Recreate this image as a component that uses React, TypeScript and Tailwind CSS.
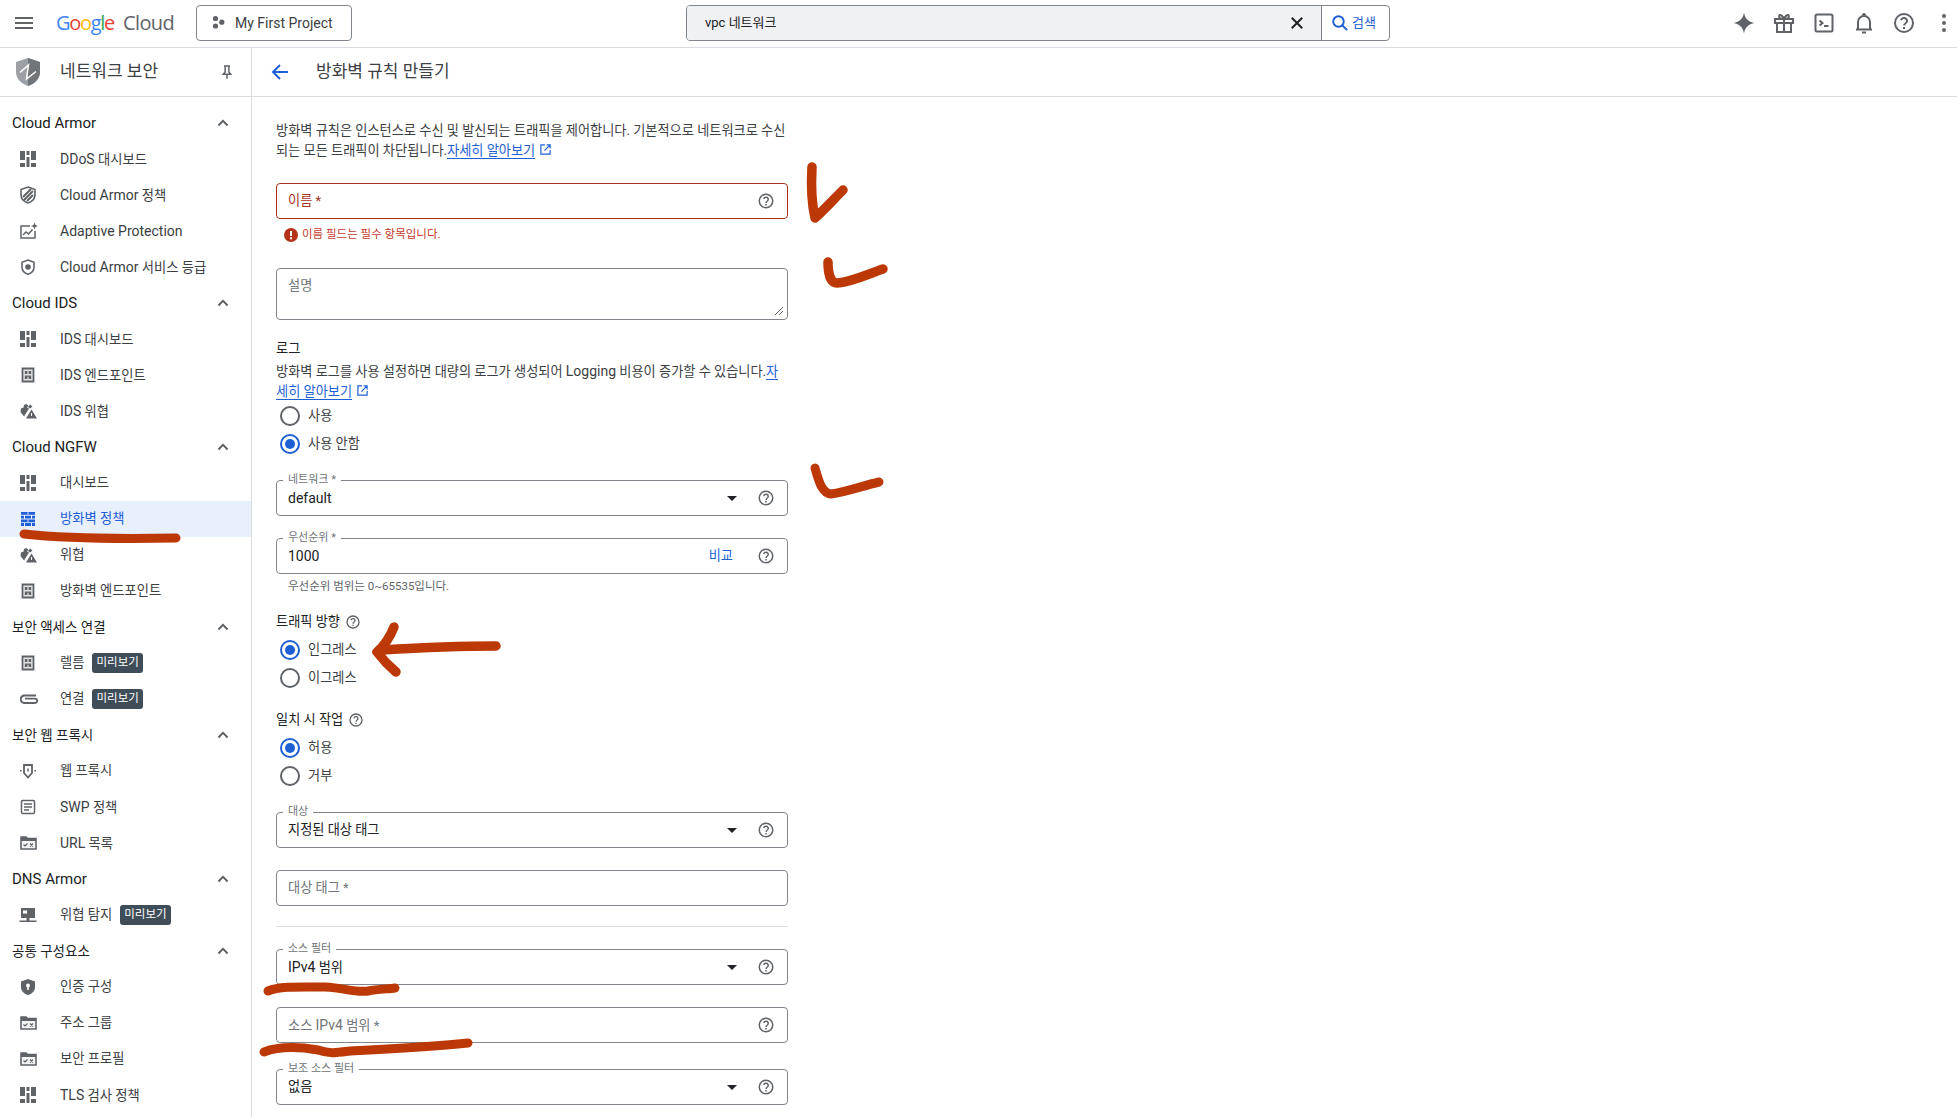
import React from "react";

const FONT = "font-['Roboto','Noto_Sans_CJK_KR',sans-serif]";
const G = "#5f6368";

type IconProps = { c?: string };

function Mixed({ text, latin = "text-[14px]" }: { text: string; latin?: string }) {
  const parts = text.split(/([A-Za-z0-9]+(?: [A-Za-z0-9]+)*)/);
  return (
    <>
      {parts.map((p, i) => (i % 2 === 1 ? <span key={i} className={latin}>{p}</span> : p))}
    </>
  );
}

const Dash = ({ c = G }: IconProps) => (
  <svg width="24" height="24" viewBox="0 0 24 24" fill={c}>
    <path d="M4 4h5v9H4zM4 16h5v4H4zM10.500 4h3v4h-3zM10.500 10h3v10h-3zM15 4h5v9h-5zM15 16h5v4h-5z" />
  </svg>
);
const StripeShield = () => (
  <svg width="24" height="24" viewBox="0 0 24 24" fill="none">
    <path d="M12 4l7 2.500v5.300c0 4-2.900 7-7 8.200-4.100-1.200-7-4.200-7-8.200V6.500z" stroke={G} strokeWidth="1.600" />
    <path d="M7 14l8-8M8 17l9-9M11 18l6-6" stroke={G} strokeWidth="2" />
  </svg>
);
const ChartSpark = () => (
  <svg width="24" height="24" viewBox="0 0 24 24" fill="none" stroke={G} strokeWidth="1.500">
    <path d="M14 7H5v12h14v-7" />
    <path d="M7 16l3-3 2.500 2 4-4.500" />
    <path d="M18.500 3.500l1 2.500 2.500 1-2.500 1-1 2.500-1-2.500-2.500-1 2.500-1z" fill={G} stroke="none" />
  </svg>
);
const DotShield = () => (
  <svg width="24" height="24" viewBox="0 0 24 24" fill="none">
    <path d="M12 5l6 2.300v4.700c0 3.500-2.500 6.200-6 7.300-3.500-1.100-6-3.800-6-7.300V7.300z" stroke={G} strokeWidth="1.600" />
    <circle cx="12" cy="12" r="2.800" fill={G} />
  </svg>
);
const Endpoint = () => (
  <svg width="24" height="24" viewBox="0 0 24 24" fill="none">
    <path d="M6.500 5.500h11v13h-11z" fill="#e3e4e6" stroke={G} strokeWidth="1.800" />
    <path d="M8.800 8h2.600v3H8.800zM12.600 8h2.600v3h-2.600zM8.800 12.500h6.400v1.200H8.800zM8.800 13.700h2.600v2.300H8.800zM12.600 13.700h2.600v2.300h-2.600z" fill={G} />
  </svg>
);
const Threat = () => (
  <svg width="24" height="24" viewBox="0 0 24 24" fill={G}>
    <path d="M10 5l2.500 1.500L11 8.500l2 1-5 8-3.500-4.500L5 9.500l2.500-1L8 6z" />
    <path d="M14 5.500l2.500 2-2.500 2-2-1.500z" />
    <path d="M15.500 10.500L21 19.500H10z" />
    <path d="M15 14h1v3h-1z" fill="#fff" />
  </svg>
);
const Firewall = ({ c = "#1f5fd6" }: IconProps) => (
  <svg width="24" height="24" viewBox="0 0 24 24" fill={c}>
    <path d="M5 5h14v2.800H5zM5 8.700h3v2.800H5zM9 8.700h6v2.800H9zM16 8.700h3v2.800h-3zM5 12.400h14v2.800H5zM5 16.100h3v2.800H5zM9 16.100h6v2.800H9zM16 16.100h3v2.800h-3z" />
    <path d="M11.600 5h.8v2.800h-.8zM11.600 12.400h.8v2.800h-.8z" fill="#e8f0fe" />
  </svg>
);
const Clip = () => (
  <svg width="24" height="24" viewBox="0 0 24 24" fill="none" stroke={G} strokeWidth="1.800">
    <path d="M20 8.500H8a3.800 3.800 0 0 0 0 7.500h11a2.100 2.100 0 0 0 0-4.300H9" />
  </svg>
);
const Proxy = () => (
  <svg width="24" height="24" viewBox="0 0 24 24" fill="none">
    <path d="M8 6h8v8l-4 4.500L8 14z" stroke={G} strokeWidth="1.800" />
    <path d="M11.300 9.500h1.500v3h-1.500z" fill={G} />
    <path d="M4 11h1.500v1.500H4zM18.500 11H20v1.500h-1.500z" fill={G} />
  </svg>
);
const Doc = () => (
  <svg width="24" height="24" viewBox="0 0 24 24" fill="none" stroke={G}>
    <rect x="5.500" y="5.500" width="13" height="13" rx="1.200" strokeWidth="1.500" />
    <path d="M8 9h8M8 12h8M8 15h5" strokeWidth="1.500" />
  </svg>
);
const FolderCheck = () => (
  <svg width="24" height="24" viewBox="0 0 24 24" fill="none">
    <path d="M5 6h5l1.500 1.500H20V18H5z" stroke={G} strokeWidth="1.600" fill="#f3f3f4" />
    <path d="M5 6h5l1.500 1.500H20V10H5z" fill={G} />
    <path d="M7.500 13.500l1.500 1.500 2.500-2.500" stroke={G} strokeWidth="1.200" />
    <path d="M14 12.500l3 3M17 12.500l-3 3" stroke={G} strokeWidth="1.200" />
  </svg>
);
const Monitor = () => (
  <svg width="24" height="24" viewBox="0 0 24 24" fill={G}>
    <path d="M5 5h14v10H5z" />
    <path d="M3.500 17.500h17V19h-17zM10.500 15h3v3h-3z" />
    <path d="M7 7.500h4v3H7z" fill="#fff" />
  </svg>
);
const KeyShield = () => (
  <svg width="24" height="24" viewBox="0 0 24 24">
    <path d="M12 4l7 2.600v5.300c0 3.900-2.900 7-7 8.100-4.100-1.100-7-4.200-7-8.100V6.600z" fill={G} />
    <circle cx="12" cy="10.500" r="2" fill="#fff" />
    <path d="M11.200 11h1.600v4h-1.600z" fill="#fff" />
  </svg>
);

const HelpIcon = ({ size = 18 }: { size?: number }) => (
  <svg width={size} height={size} viewBox="0 0 24 24" fill={G} className="shrink-0">
    <path d="M12 2a10 10 0 1 0 0 20 10 10 0 0 0 0-20zm0 18a8 8 0 1 1 0-16 8 8 0 0 1 0 16z" />
    <path d="M11 16h2v2h-2zM12.600 6.100c-2.100-.3-3.900.9-4.500 2.800l1.800.7c.3-1.100 1.300-1.800 2.400-1.700 1 .1 1.800 1 1.700 2 0 1.600-2.800 1.900-2.800 4.600h2c0-1.900 2.800-2.300 2.800-4.600 0-1.900-1.500-3.500-3.400-3.800z" />
  </svg>
);
const ExtLink = () => (
  <svg width="13" height="13" viewBox="0 0 24 24" fill="none" stroke="#1f5fd6" strokeWidth="2.200" className="inline-block ml-[4px] align-[-1px]">
    <path d="M11 3.500H3.500v17h17V13M14 3.500h6.500V10M20.500 3.500L10 14" />
  </svg>
);
const Caret = () => (
  <svg width="10" height="5" viewBox="0 0 10 5" fill="#202124" className="shrink-0">
    <path d="M0 0h10L5 5z" />
  </svg>
);
const Chevron = () => (
  <svg width="20" height="20" viewBox="0 0 24 24" fill="none" stroke={G} strokeWidth="2.400">
    <path d="M6.500 15l5.500-5.500 5.500 5.500" />
  </svg>
);

type Item = { label: string; icon: React.ReactNode; badge?: boolean; active?: boolean };
type Section = { title: string; items: Item[] };
const sections: Section[] = [
  { title: "Cloud Armor", items: [
    { label: "DDoS 대시보드", icon: <Dash /> },
    { label: "Cloud Armor 정책", icon: <StripeShield /> },
    { label: "Adaptive Protection", icon: <ChartSpark /> },
    { label: "Cloud Armor 서비스 등급", icon: <DotShield /> },
  ] },
  { title: "Cloud IDS", items: [
    { label: "IDS 대시보드", icon: <Dash /> },
    { label: "IDS 엔드포인트", icon: <Endpoint /> },
    { label: "IDS 위협", icon: <Threat /> },
  ] },
  { title: "Cloud NGFW", items: [
    { label: "대시보드", icon: <Dash /> },
    { label: "방화벽 정책", icon: <Firewall />, active: true },
    { label: "위협", icon: <Threat /> },
    { label: "방화벽 엔드포인트", icon: <Endpoint /> },
  ] },
  { title: "보안 액세스 연결", items: [
    { label: "렐름", icon: <Endpoint />, badge: true },
    { label: "연결", icon: <Clip />, badge: true },
  ] },
  { title: "보안 웹 프록시", items: [
    { label: "웹 프록시", icon: <Proxy /> },
    { label: "SWP 정책", icon: <Doc /> },
    { label: "URL 목록", icon: <FolderCheck /> },
  ] },
  { title: "DNS Armor", items: [
    { label: "위협 탐지", icon: <Monitor />, badge: true },
  ] },
  { title: "공통 구성요소", items: [
    { label: "인증 구성", icon: <KeyShield /> },
    { label: "주소 그룹", icon: <FolderCheck /> },
    { label: "보안 프로필", icon: <FolderCheck /> },
    { label: "TLS 검사 정책", icon: <Dash /> },
  ] },
];

function TopBar() {
  return (
    <header className="h-12 shrink-0 border-b border-[#dadce0] flex items-center pb-px relative bg-white">
      <svg width="24" height="24" viewBox="0 0 24 24" fill={G} className="ml-3">
        <path d="M3 6h18v2H3zM3 11h18v2H3zM3 16h18v2H3z" />
      </svg>
      <div className="ml-[21px] w-[118px] flex items-baseline text-[20px] font-['Open_Sans',sans-serif] leading-none">
        <span className="tracking-[-1.300px] flex -ml-px">
          <span className="text-[#4285f4]">G</span>
          <span className="text-[#ea4335]">o</span>
          <span className="text-[#fbbc04]">o</span>
          <span className="text-[#4285f4]">g</span>
          <span className="text-[#34a853]">l</span>
          <span className="text-[#ea4335]">e</span>
        </span>
        <span className="text-[#5f6368] ml-[9px] tracking-[-0.600px]">Cloud</span>
      </div>
      <button className="ml-[21px] h-9 w-[156px] border border-[#80868b] rounded-[4px] flex items-center text-[14px] text-[#3c4043]">
        <svg width="16" height="16" viewBox="0 0 16 16" fill={G} className="ml-[13px] mr-[9px]">
          <circle cx="5.500" cy="3.500" r="2.600" />
          <circle cx="5.500" cy="11" r="2.600" />
          <circle cx="11.800" cy="7.200" r="2.600" />
        </svg>
        My First Project
      </button>
      <div className="ml-[334px] h-9 w-[704px] border border-[#80868b] rounded-[4px] flex overflow-hidden">
        <div className="flex-1 bg-[#f0f1f3] flex items-center pl-[18px] text-[13px] text-[#202124] border-r border-[#80868b]">
          <span className="flex-1">vpc 네트워크</span>
          <svg width="18" height="18" viewBox="0 0 24 24" fill="none" stroke="#202124" strokeWidth="2.600" className="mr-[15px]">
            <path d="M5 5l14 14M19 5L5 19" />
          </svg>
        </div>
        <div className="w-[67px] flex items-center pl-[9px] text-[#1f5fd6] text-[13px]">
          <svg width="18" height="18" viewBox="0 0 24 24" fill="none" stroke="#1f5fd6" strokeWidth="2.600" className="shrink-0 mr-[3px]">
            <circle cx="10" cy="10" r="7" />
            <path d="M15 15l6.500 6.500" />
          </svg>
          검색
        </div>
      </div>
      <div className="ml-auto flex items-center">
        <div className="w-10 flex justify-center">
          <svg width="24" height="24" viewBox="0 0 24 24" fill={G}>
            <path d="M12 1.500c.8 5.800 4.400 9.600 10.500 10.500-6.100.9-9.700 4.700-10.500 10.500-.8-5.800-4.400-9.600-10.500-10.500 6.100-.9 9.700-4.700 10.500-10.500z" />
          </svg>
        </div>
        <div className="w-10 flex justify-center">
          <svg width="24" height="24" viewBox="0 0 24 24" fill="none" stroke={G} strokeWidth="2">
            <path d="M3 8h18v4H3zM5 12v9h14v-9M12 8v13M12 8C10 3 6 3 7.500 6.500 8 7.500 10 8 12 8zM12 8c2-5 6-5 4.500-1.500C16 7.500 14 8 12 8z" />
          </svg>
        </div>
        <div className="w-10 flex justify-center">
          <svg width="24" height="24" viewBox="0 0 24 24" fill="none" stroke={G} strokeWidth="2">
            <rect x="3.500" y="3.500" width="17" height="17" rx="1.500" />
            <path d="M7.500 9.500l3 2.500-3 2.500M12 15h4.500" />
          </svg>
        </div>
        <div className="w-10 flex justify-center">
          <svg width="24" height="24" viewBox="0 0 24 24" fill="none" stroke={G} strokeWidth="2">
            <path d="M4 18.500h16M6 18.500V11a6 6 0 0 1 12 0v7.500" />
            <path d="M10 21.500h4" />
            <circle cx="12" cy="4" r="1" fill={G} />
          </svg>
        </div>
        <div className="w-10 flex justify-center"><HelpIcon size={24} /></div>
        <div className="w-[33px] flex justify-start pl-[8px]">
          <svg width="24" height="24" viewBox="0 0 24 24" fill={G} className="shrink-0">
            <circle cx="12" cy="5" r="2" /><circle cx="12" cy="12" r="2" /><circle cx="12" cy="19" r="2" />
          </svg>
        </div>
      </div>
    </header>
  );
}

function Sidebar() {
  return (
    <aside className="w-[252px] shrink-0 border-r border-[#dadce0] flex flex-col">
      <div className="h-[49px] shrink-0 border-b border-[#dadce0] flex items-center relative">
        <svg width="28" height="30" viewBox="0 0 28 30" className="ml-[14px] shrink-0">
          <path d="M14 1l12 4v10c0 6.500-5 11.500-12 14C7 26.500 2 21.500 2 15V5z" fill="#9aa0a6" />
          <path d="M14 1l12 4v10c0 6.500-5 11.500-12 14z" fill="#70757a" />
          <path d="M6 15.500L14.500 8 12.500 22 22 14.500" stroke="#fff" strokeWidth="1.500" fill="none" />
        </svg>
        <span className="ml-[18px] text-[17px] text-[#3c4043]">네트워크 보안</span>
        <svg width="18" height="18" viewBox="0 0 24 24" fill="none" stroke={G} strokeWidth="2" className="ml-auto mr-[15px]">
          <path d="M8 4h8M9.500 4v8l-2.500 3h10l-2.500-3V4M12 15v6" />
        </svg>
      </div>
      <nav className="pt-2 flex-1 overflow-hidden">
        {sections.map((s) => (
          <div key={s.title}>
            <div className="h-9 flex items-center justify-between pl-3 pr-[18px] text-[13.500px] text-[#202124]">
              <span><Mixed text={s.title} latin="text-[15px]" /></span>
              <Chevron />
            </div>
            {s.items.map((it) => (
              <div key={it.label} className={`h-9 flex items-center pl-4 text-[13.300px] ${it.active ? "bg-[#e8f0fe] text-[#1f5fd6]" : "text-[#3c4043]"}`}>
                <span className="w-6 h-6 shrink-0">{it.icon}</span>
                <span className="ml-5"><Mixed text={it.label} /></span>
                {it.badge && (
                  <span className="ml-2 h-5 px-[4px] rounded-[3px] bg-[#3f4d59] text-white text-[11.500px] flex items-center">미리보기</span>
                )}
              </div>
            ))}
          </div>
        ))}
      </nav>
    </aside>
  );
}

function Outline({ label, value, right, className = "", placeholder, error }: {
  label?: string; value?: string; right?: React.ReactNode; className?: string; placeholder?: string; error?: boolean;
}) {
  return (
    <div className={`relative h-9 rounded-[4px] border flex items-center pl-[11px] pr-[12px] text-[13.200px] ${error ? "border-[#a8301f]" : "border-[#80868b]"} ${className}`}>
      {label && (
        <span className="absolute left-[6px] top-[-8px] bg-white px-[5px] text-[11px] leading-[14px] text-[#70757a]">{label}</span>
      )}
      {value && <span className="flex-1 text-[#202124]"><Mixed text={value} /></span>}
      {placeholder && <span className={`flex-1 ${error ? "text-[#a8301f]" : "text-[#70757a]"}`}><Mixed text={placeholder} /></span>}
      {right}
    </div>
  );
}

const SelectEnd = () => (
  <>
    <Caret />
    <span className="ml-[20px]"><HelpIcon /></span>
  </>
);

function Radio({ label, on }: { label: string; on?: boolean }) {
  return (
    <div className="h-7 flex items-center pl-[4px] text-[13.200px] text-[#3c4043]">
      <span className={`w-5 h-5 rounded-full border-2 flex items-center justify-center ${on ? "border-[#1f5fd6]" : "border-[#5f6368]"}`}>
        {on && <span className="w-[10px] h-[10px] rounded-full bg-[#1f5fd6]" />}
      </span>
      <span className="ml-[8px]">{label}</span>
    </div>
  );
}

function Form() {
  return (
    <div className="w-[512px] ml-6 pt-[24px] text-[13.200px] text-[#3c4043]">
      <p className="leading-[20px]">
        방화벽 규칙은 인스턴스로 수신 및 발신되는 트래픽을 제어합니다. 기본적으로 네트워크로 수신되는 모든 트래픽이 차단됩니다.
        <a className="text-[#1f5fd6] border-b border-[#1f5fd6]">자세히 알아보기</a><ExtLink />
      </p>
      <Outline className="mt-[22px]" placeholder="이름 *" error right={<HelpIcon />} />
      <div className="mt-[8px] h-4 flex items-center pl-2 text-[11.500px] text-[#c5392b]">
        <svg width="14" height="14" viewBox="0 0 14 14" className="mr-[4px] shrink-0">
          <circle cx="7" cy="7" r="7" fill="#b3341b" />
          <path d="M6 3h2v5H6zM6 9.300h2v2H6z" fill="#fff" />
        </svg>
        이름 필드는 필수 항목입니다.
      </div>
      <div className="mt-[25px] relative h-[52px] rounded-[4px] border border-[#80868b] pl-[11px] pt-[7px] text-[13.200px] text-[#70757a]">
        설명
        <svg width="10" height="10" viewBox="0 0 10 10" className="absolute right-[3px] bottom-[3px]" stroke="#5f6368" fill="none">
          <path d="M1 9l8-8M5 9l4-4" />
        </svg>
      </div>
      <div className="mt-[19px] h-5 leading-5 text-[#202124]">로그</div>
      <p className="mt-[3px] leading-[20px]">
        방화벽 로그를 사용 설정하면 대량의 로그가 생성되어 <span className="text-[14px] leading-none">Logging</span> 비용이 증가할 수 있습니다.
        <a className="text-[#1f5fd6] border-b border-[#1f5fd6]">자세히 알아보기</a><ExtLink />
      </p>
      <Radio label="사용" />
      <Radio label="사용 안함" on />
      <Outline className="mt-[22px]" label="네트워크 *" value="default" right={<SelectEnd />} />
      <Outline className="mt-[22px]" label="우선순위 *" value="1000" right={
        <>
          <span className="text-[#1f5fd6] mr-[24px]">비교</span>
          <HelpIcon />
        </>
      } />
      <div className="mt-[4px] h-4 leading-4 pl-3 text-[11.500px] text-[#5f6368]">우선순위 범위는 0~65535입니다.</div>
      <div className="mt-[18px] h-5 flex items-center text-[#202124]">트래픽 방향<span className="ml-[5px]"><HelpIcon size={16} /></span></div>
      <div className="mt-1">
        <Radio label="인그레스" on />
        <Radio label="이그레스" />
      </div>
      <div className="mt-[18px] h-5 flex items-center text-[#202124]">일치 시 작업<span className="ml-[5px]"><HelpIcon size={16} /></span></div>
      <div className="mt-1">
        <Radio label="허용" on />
        <Radio label="거부" />
      </div>
      <Outline className="mt-[22px]" label="대상" value="지정된 대상 태그" right={<SelectEnd />} />
      <Outline className="mt-[22px]" placeholder="대상 태그 *" />
      <div className="mt-[20px] h-px bg-[#dadce0]" />
      <Outline className="mt-[22px]" label="소스 필터" value="IPv4 범위" right={<SelectEnd />} />
      <Outline className="mt-[22px]" placeholder="소스 IPv4 범위 *" right={<HelpIcon />} />
      <Outline className="mt-[26px]" label="보조 소스 필터" value="없음" right={<SelectEnd />} />
    </div>
  );
}

function Annotations() {
  const marks: [string, number][] = [
    ["M812 167C811 185 812 205 815 218C824 210 834 199 843 190", 9.500],
    ["M828 262C828 275 831 283 837 283C852 282 868 274 883 269", 9.500],
    ["M815 468C819 482 822 493 831 494C846 492 862 486 879 482", 9],
    ["M496 646C455 646 415 648 382 650", 9.500],
    ["M394 627C390 637 384 646 377 652C383 660 390 667 396 672", 9.500],
    ["M24 534C60 538 120 539 176 538", 9],
    ["M268 991C280 986 300 987 325 987C345 988 355 993 368 991C378 989 388 989 395 988", 9],
    ["M264 1052C280 1046 300 1047 318 1050C330 1054 335 1053 350 1051C390 1049 430 1047 468 1043", 9],
  ];
  return (
    <svg width="1957" height="1117" viewBox="0 0 1957 1117" className="absolute top-0 left-0 pointer-events-none" fill="none">
      {marks.map(([d, w], i) => (
        <path key={i} d={d} stroke="#bd3807" strokeWidth={w} strokeLinecap="round" strokeLinejoin="round" />
      ))}
    </svg>
  );
}

export default function App() {
  return (
    <div className={`relative w-[1957px] h-[1117px] overflow-hidden bg-white flex flex-col ${FONT}`}>
      <TopBar />
      <div className="flex flex-1 min-h-0">
        <Sidebar />
        <main className="flex-1 min-w-0 flex flex-col">
          <div className="h-[49px] shrink-0 border-b border-[#dadce0] flex items-center">
            <svg width="24" height="24" viewBox="0 0 24 24" fill="none" stroke="#1f5fd6" strokeWidth="2" className="ml-4 shrink-0">
              <path d="M20 12H5M12 5l-7 7 7 7" />
            </svg>
            <h1 className="ml-6 text-[17px] text-[#3c4043] font-normal">방화벽 규칙 만들기</h1>
          </div>
          <Form />
        </main>
      </div>
      <Annotations />
    </div>
  );
}
